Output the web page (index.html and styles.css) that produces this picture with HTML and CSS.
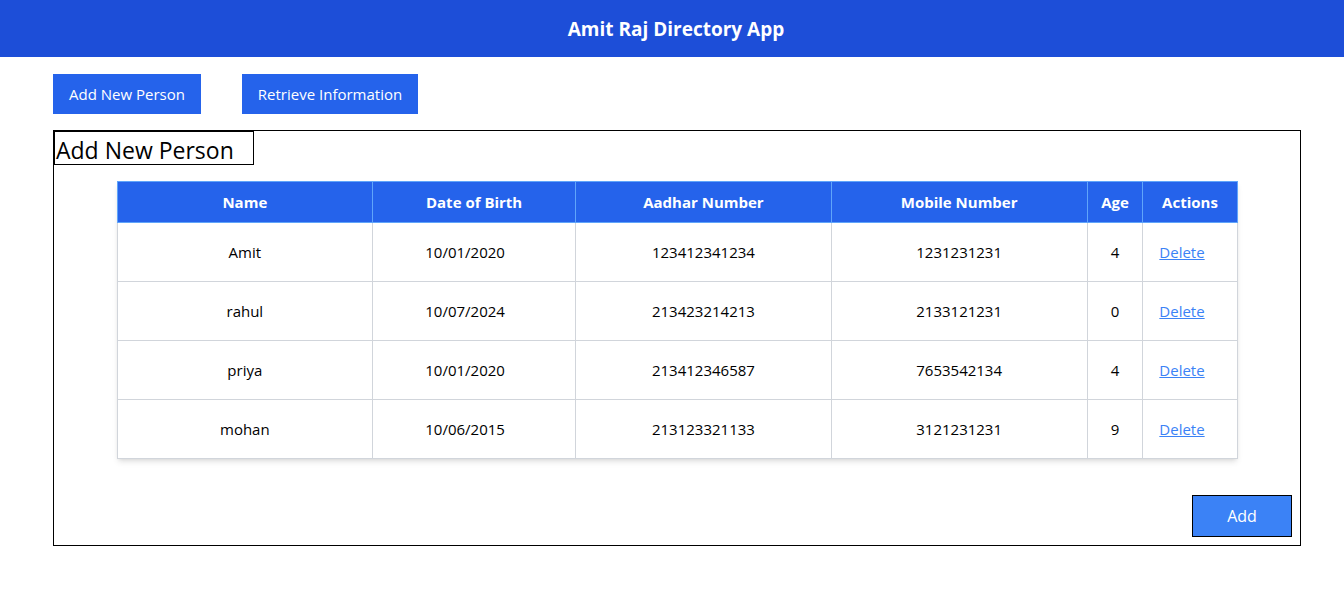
FILE: index.html
```html
<!DOCTYPE html>
<html>
<head>
<meta charset="utf-8">
<link rel="stylesheet" href="styles.css">
</head>
<body>
<header class="topbar"><h1 class="title">Amit Raj Directory App</h1></header>
<div class="actions">
  <button class="btn">Add New Person</button>
  <button class="btn">Retrieve Information</button>
</div>
<section class="panel">
  <h2 class="panel-title">Add New Person</h2>
  <table class="people">
    <colgroup>
      <col class="c-name"><col class="c-dob"><col class="c-aadhar"><col class="c-mobile"><col class="c-age"><col class="c-act">
    </colgroup>
    <thead>
      <tr><th>Name</th><th>Date of Birth</th><th>Aadhar Number</th><th>Mobile Number</th><th>Age</th><th>Actions</th></tr>
    </thead>
    <tbody>
      <tr><td>Amit</td><td class="dob">10/01/2020</td><td>123412341234</td><td>1231231231</td><td>4</td><td class="act"><a class="del" href="#">Delete</a></td></tr>
      <tr><td>rahul</td><td class="dob">10/07/2024</td><td>213423214213</td><td>2133121231</td><td>0</td><td class="act"><a class="del" href="#">Delete</a></td></tr>
      <tr><td>priya</td><td class="dob">10/01/2020</td><td>213412346587</td><td>7653542134</td><td>4</td><td class="act"><a class="del" href="#">Delete</a></td></tr>
      <tr><td>mohan</td><td class="dob">10/06/2015</td><td>213123321133</td><td>3121231231</td><td>9</td><td class="act"><a class="del" href="#">Delete</a></td></tr>
    </tbody>
  </table>
  <div class="panel-foot"><button class="add-btn">Add</button></div>
</section>
</body>
</html>
```
FILE: styles.css
```css
* { box-sizing: border-box; }
body {
  margin: 0;
  font-family: "Open Sans", "Noto Sans", sans-serif;
  color: #000;
  background: #fff;
}
.topbar {
  background: #1d4ed8;
  height: 57px;
  display: flex;
  align-items: center;
  justify-content: center;
}
.title {
  margin: 0;
  color: #fff;
  font-size: 19px;
  font-weight: 700;
  line-height: 28px;
  padding-left: 8px;
}
.actions {
  display: flex;
  gap: 41px;
  padding: 17px 0 0 53px;
}
.btn {
  font-family: inherit;
  font-size: 15px;
  line-height: 24px;
  height: 40px;
  padding: 0 8px;
  border: none;
  background: #2563eb;
  color: #fff;
  white-space: nowrap;
}
.btn:first-child { width: 148px; }
.btn:last-child { width: 176px; }
.panel {
  margin: 16px 0 0 53px;
  width: 1248px;
  height: 416px;
  border: 1px solid #000;
}
.panel-title {
  margin: 0;
  width: 200px;
  height: 34px;
  border: 1px solid #000;
  font-size: 23px;
  font-weight: 400;
  line-height: 30px;
  padding: 3px 0 0 1px;
}
.people {
  width: 1121px;
  margin: 16px auto 0;
  border-collapse: collapse;
  font-size: 15px;
  box-shadow: 0 4px 6px -1px rgba(0,0,0,0.1), 0 2px 4px -2px rgba(0,0,0,0.1);
}
.c-name { width: 256px; }
.c-dob { width: 203px; }
.c-aadhar { width: 256px; }
.c-mobile { width: 256px; }
.c-age { width: 56px; }
.c-act { width: 94px; }
.people th {
  background: #2563eb;
  color: #fff;
  font-weight: 700;
  height: 41px;
  padding: 0 8px;
  border: 1px solid #60a5fa;
  text-align: center;
}
.people td {
  height: 59px;
  padding: 0 8px;
  border: 1px solid #d1d5db;
  text-align: center;
}
.people td.dob { padding: 0 26px 0 8px; }
.people td.act { padding: 0 24px 0 8px; }
.del {
  color: #3b82f6;
  text-decoration: underline;
}
.panel-foot {
  display: flex;
  justify-content: flex-end;
  padding: 36px 8px 0 0;
}
.add-btn {
  font-family: inherit;
  font-size: 16px;
  width: 100px;
  height: 42px;
  background: #3b82f6;
  color: #fff;
  border: 1px solid #000;
}
```
